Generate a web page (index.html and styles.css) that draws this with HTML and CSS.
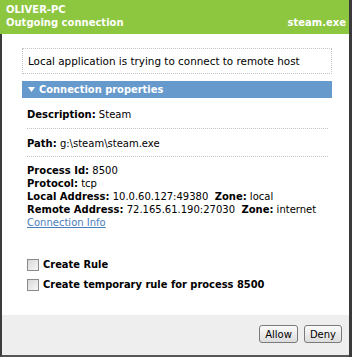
FILE: index.html
```html
<!DOCTYPE html>
<html lang="en">

<head>
    <meta charset="utf-8">
    <title>Outgoing connection</title>
    <link rel="stylesheet" href="styles.css">
</head>

<body>
    <div class="dialog">

        <header class="top">
            <div class="pc">OLIVER-PC</div>
            <div class="row">
                <span>Outgoing connection</span>
                <span>steam.exe</span>
            </div>
        </header>

        <main class="content">
            <p class="notice">Local application is trying to connect to remote host</p>

            <div class="section">
                <svg class="arrow" width="7" height="5" viewBox="0 0 7 5"><path d="M0 0H7L3.5 5Z" fill="#fff"/></svg>
                Connection properties
            </div>

            <div class="prop line first">
                <b>Description:</b> Steam
            </div>
            <div class="prop line">
                <b>Path:</b> g:\steam\steam.exe
            </div>

            <div class="prop details">
                <div><b>Process Id:</b> 8500</div>
                <div><b>Protocol:</b> tcp</div>
                <div><b>Local Address:</b> 10.0.60.127:49380 &nbsp;<b>Zone:</b> local</div>
                <div><b>Remote Address:</b> 72.165.61.190:27030 &nbsp;<b>Zone:</b> internet</div>
                <a href="#" class="info">Connection Info</a>
            </div>

            <div class="rules">
                <label><span class="box"></span>Create Rule</label>
                <label><span class="box"></span>Create temporary rule for process 8500</label>
            </div>
        </main>

        <footer class="bottom">
            <button>Allow</button>
            <button>Deny</button>
        </footer>

    </div>
</body>

</html>
```

FILE: styles.css
```css
html {
    font-family: "DejaVu Sans", Verdana, sans-serif;
    font-size: 10px;
}

body {
    margin: 0;
    background-color: #ffffff;
}

.dialog {
    width: 352px;
    height: 357px;
    box-sizing: border-box;
    border-right: 3px solid #3a3a3a;
    display: flex;
    flex-direction: column;
}

.top {
    background-color: #8dc63f;
    color: #ffffff;
    font-weight: bold;
    line-height: 13px;
    padding: 3px 3px 5px 6px;
}

.row {
    display: flex;
    justify-content: space-between;
}

.content {
    flex: 1;
    border-left: 2px solid #3c3c3c;
    padding: 14px 17px 0 20px;
    color: #000000;
}

.notice {
    margin: 0;
    border: 1px dotted #c4c4c4;
    padding: 6px 5px 5px;
    line-height: 13px;
    font-size: 10.4px;
}

.section {
    margin-top: 7px;
    background-color: #6699cc;
    color: #ffffff;
    font-family: "DejaVu Sans Condensed", "DejaVu Sans", sans-serif;
    font-weight: bold;
    font-size: 11px;
    line-height: 17px;
    padding-left: 6px;
    display: flex;
    align-items: center;
    gap: 4px;
}

.prop {
    margin: 0 4px 0 5px;
    line-height: 13px;
}

.line {
    padding: 8px 0 6px;
    border-bottom: 1px dotted #c4c4c4;
}

.first {
    padding-top: 10px;
    padding-bottom: 7px;
}

.details {
    padding-top: 7px;
}

.info {
    color: #4a7ebb;
}

.rules {
    margin: 30px 5px 0;
    display: flex;
    flex-direction: column;
    gap: 8px;
}

.rules label {
    display: flex;
    align-items: center;
    font-family: "DejaVu Sans Condensed", "DejaVu Sans", sans-serif;
    font-weight: bold;
    font-size: 11px;
    line-height: 12px;
}

.box {
    width: 10px;
    height: 10px;
    border: 1px solid #8a8a8a;
    background: linear-gradient(135deg, #d8d8d8, #f8f8f8);
    margin-right: 4px;
}

.bottom {
    height: 42px;
    box-sizing: border-box;
    background-color: #eeeeee;
    border-left: 2px solid #3c3c3c;
    border-bottom: 2px solid #555555;
    display: flex;
    justify-content: flex-end;
    align-items: center;
    gap: 6px;
    padding: 0 7px 2px 0;
}

button {
    font-family: "DejaVu Sans", Verdana, sans-serif;
    font-size: 10px;
    height: 18px;
    padding: 0 5px;
    border: 1px solid #7a7a7a;
    border-radius: 3px;
    background: linear-gradient(to bottom, #fbfbfb, #dcdcdc);
    color: #000000;
}
```
